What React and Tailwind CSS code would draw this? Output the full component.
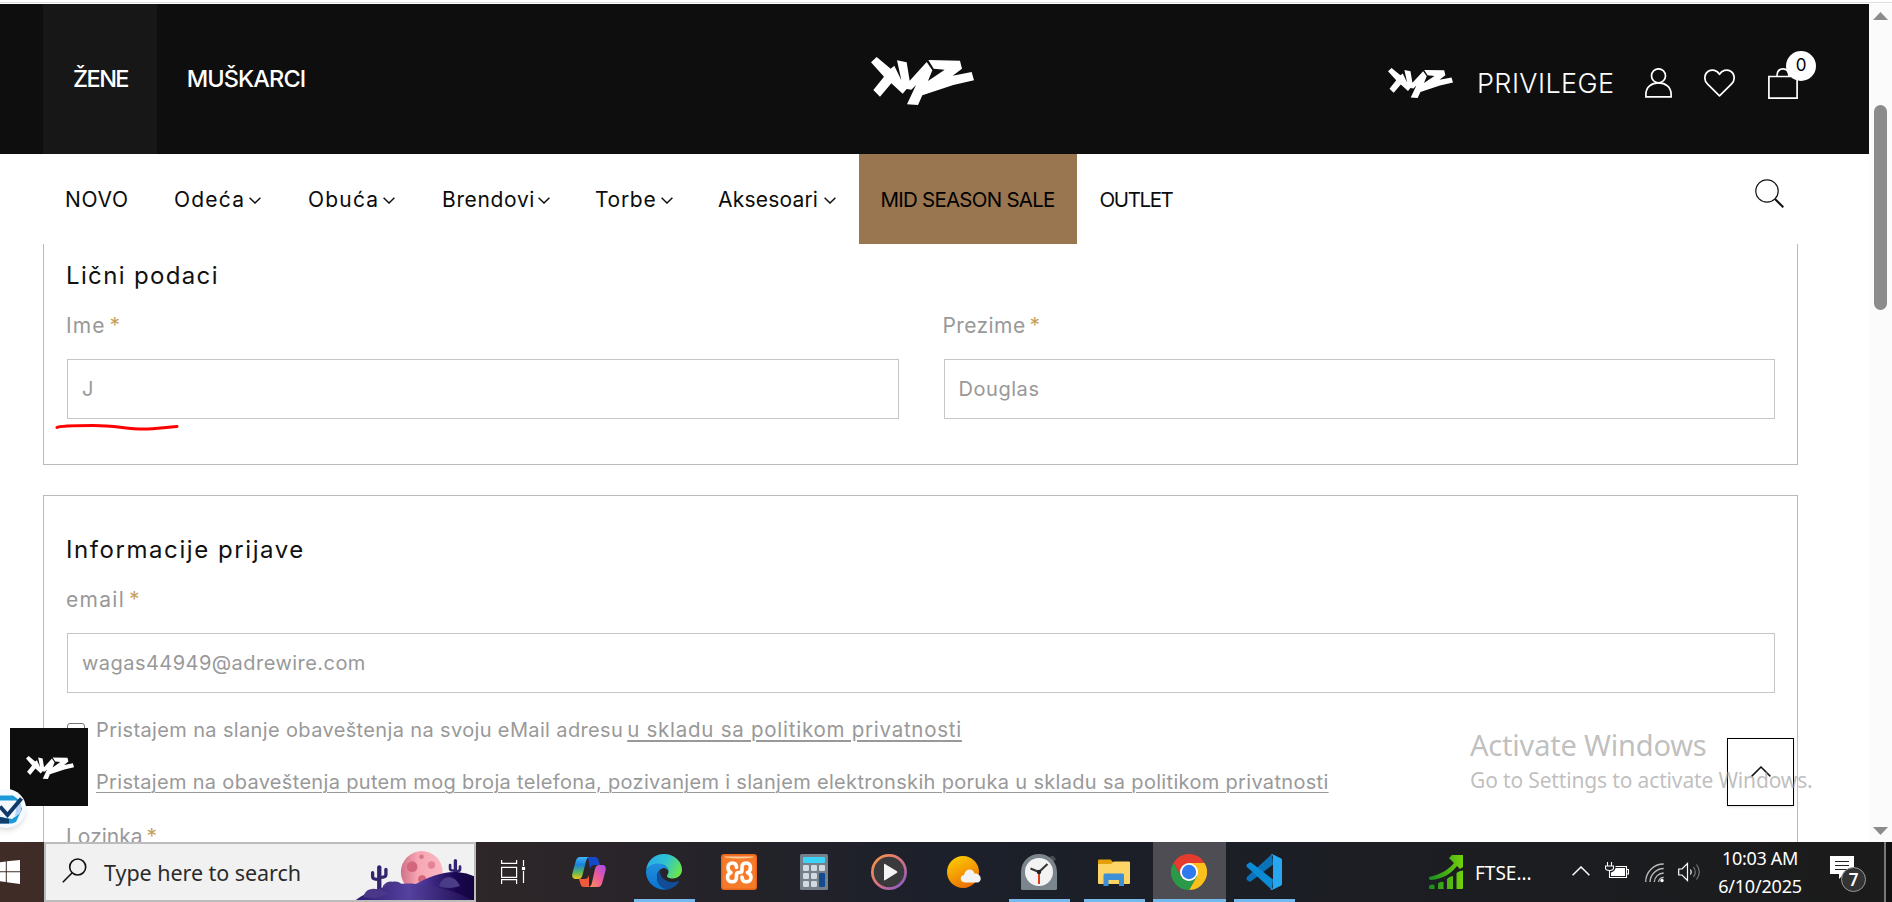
import React from "react";

const LOGO_PATH =
  "M230 171L272 206L283 197L304 241L291 181L320 187L329 242L380 186L397 211L384 243L434 209L401 206L385 180L480 182L486 206L458 227L515 216L522 241L460 255L367 286L354 315L321 313L348 255L334 269L320 267L308 281L274 250L240 290L220 270L252 230L213 187Z";

function Logo({ className }) {
  return (
    <svg viewBox="213 171 309 144" preserveAspectRatio="none" className={className} fill="#fff">
      <path d={LOGO_PATH} />
    </svg>
  );
}

function Chevron() {
  return (
    <svg viewBox="0 0 12 7" className="h-[7px] w-3 shrink-0" fill="none" stroke="#111" strokeWidth="1.5">
      <path d="M.6 .7L6 6L11.4 .7" />
    </svg>
  );
}

function NavItem({ width, text, children }) {
  return (
    <li className="px-[22.5px]">
      <div className={`flex items-center justify-between whitespace-nowrap ${width}`}>
        <span className={text}>{children}</span>
        <Chevron />
      </div>
    </li>
  );
}

function Header() {
  return (
    <header className="flex h-[150px] shrink-0 items-center bg-[#0e0e0e] pl-[43px] text-white">
      <div className="flex h-full w-[114px] items-center justify-center bg-[#171717] pl-px text-[23.5px] font-medium tracking-[-1.6px]">
        ŽENE
      </div>
      <div className="flex h-full w-[178px] items-center justify-center text-[23.5px] font-medium tracking-[-0.9px]">
        MUŠKARCI
      </div>
      <Logo className="mt-1 ml-[536px] h-12 w-[103px]" />
      <div className="mt-2 ml-[414px] flex items-center">
        <Logo className="h-[30px] w-[65px]" />
        <span className="mt-0.5 ml-6 w-[140px] text-[27px] leading-7 font-light tracking-[0.4px]">PRIVILEGE</span>
        <svg viewBox="0 0 27 30" className="ml-7 h-[30px] w-[27px]" fill="none" stroke="#fff" strokeWidth="1.7">
          <circle cx="13.5" cy="7.8" r="7" />
          <path d="M.9 28.8v-2.6C.9 19 6.500 14.800 13.500 14.800S26.100 19 26.100 26.200v2.600Z" />
        </svg>
        <svg viewBox="0 0 31 28" className="ml-8 h-7 w-[31px]" fill="none" stroke="#fff" strokeWidth="1.7" strokeLinejoin="round">
          <path d="M15.500 26.800L3.400 14.900C-.6 10.800 .4 4.700 4.300 2.300C8.300-.1 13 1.200 15.500 5.300C18 1.200 22.700-.1 26.700 2.300C30.600 4.700 31.600 10.800 27.600 14.900Z" />
        </svg>
        <div className="relative ml-[33px] h-[31px] w-[30px]">
          <svg viewBox="0 0 30 31" className="h-full w-full" fill="none" stroke="#fff" strokeWidth="1.7">
            <path d="M.9 8.500h28.200v21.600H.9Z" />
            <path d="M9 8.300C9 3.500 11 .9 15 .9s6 2.600 6 7.400" />
          </svg>
          <span className="absolute -top-[17px] left-[18px] flex size-[30px] items-center justify-center rounded-full bg-white text-[17px] text-black">
            0
          </span>
        </div>
      </div>
    </header>
  );
}

function Nav() {
  return (
    <nav className="flex h-[90px] shrink-0 items-center bg-white pl-[42.5px] text-[21px] text-[#0c0c0c]">
      <ul className="flex h-full items-center">
        <li className="w-[107px] px-[22.5px] pt-0.5 tracking-[0.7px]">NOVO</li>
        <NavItem width="w-[89px] pt-0.5" text="tracking-[1.2px] ml-0.5">Odeća</NavItem>
        <NavItem width="w-[89px] pt-0.5" text="tracking-[1.2px] ml-0.5">Obuća</NavItem>
        <NavItem width="w-[110px] pt-0.5" text="tracking-[0.65px] ml-0.5">Brendovi</NavItem>
        <NavItem width="w-[78px] pt-0.5" text="tracking-[0.7px]">Torbe</NavItem>
        <NavItem width="w-[118px] pt-0.5" text="tracking-[0.2px]">Aksesoari</NavItem>
        <li className="flex h-[90px] w-[218px] items-center justify-center bg-[#997650] pt-0.5 text-[20.5px] tracking-[-0.75px] whitespace-nowrap text-black">
          MID SEASON SALE
        </li>
        <li className="px-[23px] pt-0.5 text-[20.5px] tracking-[-1.4px]">OUTLET</li>
      </ul>
      <svg viewBox="0 0 29 29" className="mr-[85px] -mt-3 ml-auto size-[29px]" fill="none" stroke="#111">
        <circle cx="12" cy="12" r="11.200" strokeWidth="1.200" />
        <path d="M20 20L28.300 28.300" strokeWidth="2" />
      </svg>
    </nav>
  );
}

function Label({ className, children }) {
  return (
    <div className="-ml-px text-[21px] leading-7 text-[#999]">
      <span className={className}>{children}</span>
      <span className="ml-1 text-[#c5a15c]">*</span>
    </div>
  );
}

function Field({ className, children }) {
  return (
    <div className={`mt-[19px] flex h-[60px] items-center border border-[#c6c6c6] px-3.5 pb-px text-xl text-[#999] ${className}`}>
      {children}
    </div>
  );
}

function Checkbox() {
  return <span className="mt-1 size-[18px] shrink-0 rounded-[3px] border-[1.5px] border-[#767676] bg-white" />;
}

function Form() {
  return (
    <main className="min-h-0 flex-1 overflow-hidden pr-[71px] pl-[43px]">
      <section className="h-[221px] border border-t-0 border-[#bbb] pt-4 pr-[22px] pl-[23px]">
        <h2 className="-ml-px text-2xl leading-8 tracking-[1.35px] text-[#111]">Lični podaci</h2>
        <div className="mt-5 grid grid-cols-2 gap-[45px]">
          <div>
            <Label className="tracking-[1.1px]">Ime</Label>
            <Field>J</Field>
          </div>
          <div>
            <Label className="tracking-[0.4px]">Prezime</Label>
            <Field className="tracking-[0.55px]">Douglas</Field>
          </div>
        </div>
      </section>
      <section className="mt-[30px] h-[500px] border border-[#bbb] pt-[38px] pr-[22px] pl-[23px]">
        <h2 className="-ml-px text-2xl leading-8 tracking-[1.57px] text-[#111]">Informacije prijave</h2>
        <div className="mt-5">
          <Label className="tracking-[1.3px]">email</Label>
          <Field className="tracking-[0.46px]">wagas44949@adrewire.com</Field>
        </div>
        <div className="mt-[23px] flex h-7 items-center text-xl leading-7 whitespace-nowrap text-[#999]">
          <Checkbox />
          <span className="ml-[11px] tracking-[0.36px]">Pristajem na slanje obaveštenja na svoju eMail adresu</span>
          <span className="ml-[4px] text-[20.5px] tracking-[0.74px] underline decoration-2 underline-offset-[3px]">
            u skladu sa politikom privatnosti
          </span>
        </div>
        <div className="mt-6 flex h-7 items-center text-xl leading-7 whitespace-nowrap text-[#999]">
          <Checkbox />
          <span className="ml-[11px] tracking-[0.32px] underline decoration-1 underline-offset-[3px]">
            Pristajem na obaveštenja putem mog broja telefona, pozivanjem i slanjem elektronskih poruka u skladu sa politikom privatnosti
          </span>
        </div>
        <div className="mt-[27px]">
          <Label className="tracking-[0px]">Lozinka</Label>
        </div>
      </section>
    </main>
  );
}

function Scrollbar() {
  return (
    <div className="flex w-[23px] flex-col items-center bg-[#fbfbfb] pt-2 pb-[7px]">
      <svg viewBox="0 0 15 8" className="h-2 w-[15px]" fill="#8b8b8b">
        <path d="M7.500 0L15 8H0Z" />
      </svg>
      <div className="mt-[85px] h-[205px] w-[13px] rounded-full bg-[#8b8b8b]" />
      <svg viewBox="0 0 15 8" className="mt-auto h-2 w-[15px]" fill="#8b8b8b">
        <path d="M0 0H15L7.500 8Z" />
      </svg>
    </div>
  );
}

function DesertScene() {
  return (
    <svg viewBox="1065 492 361 168" className="h-14 w-[120px] self-end">
      <defs>
        <linearGradient id="hillA" x1="0" x2="1">
          <stop offset="0" stopColor="#2b1a70" />
          <stop offset=".45" stopColor="#55419f" />
          <stop offset="1" stopColor="#1b0a4c" />
        </linearGradient>
        <linearGradient id="hillB" x1="0" x2="1">
          <stop offset="0" stopColor="#5a46ae" />
          <stop offset=".7" stopColor="#1a0650" />
          <stop offset="1" stopColor="#14033f" />
        </linearGradient>
        <linearGradient id="moon" x1="0" x2="1">
          <stop offset="0" stopColor="#cf7187" />
          <stop offset=".4" stopColor="#f7a5b3" />
          <stop offset="1" stopColor="#f9b9c2" />
        </linearGradient>
      </defs>
      <circle cx="1269" cy="576" r="63" fill="url(#moon)" />
      <circle cx="1240" cy="560" r="16" fill="#d3667c" />
      <circle cx="1298" cy="555" r="11" fill="#e58396" />
      <circle cx="1268" cy="530" r="7" fill="#d8748a" />
      <circle cx="1270" cy="598" r="12" fill="#d3667c" />
      <g fill="none" stroke="#34246f" strokeLinecap="round">
        <path d="M1141 562V640" strokeWidth="13" />
        <path d="M1121 578V590Q1121 598 1139 598M1161 568V584Q1161 592 1143 592" strokeWidth="10" />
        <path d="M1370 542V590" strokeWidth="10" />
        <path d="M1354 555V566Q1354 572 1368 572M1384 560V568Q1384 574 1372 574" strokeWidth="8" />
      </g>
      <path d="M1240 618C1290 590 1340 572 1380 577Q1405 578 1428 590V662H1240Z" fill="url(#hillB)" />
      <path d="M1320 618Q1330 592 1350 591Q1372 592 1384 618Q1350 630 1320 618Z" fill="#4b3c87" />
      <path d="M1152 618Q1164 603 1180 605Q1204 602 1214 620Q1190 636 1152 630Z" fill="#4a3787" />
      <path d="M1068 662C1110 630 1190 605 1250 612C1320 617 1370 635 1426 662Z" fill="url(#hillA)" />
      <path d="M1094 646Q1104 624 1130 627Q1156 626 1166 642Q1140 660 1094 652Z" fill="#4a3787" />
    </svg>
  );
}

function TaskbarApp({ running, active, children }) {
  return (
    <div
      className={`flex h-full flex-col items-center ${active ? "mx-px w-[73px] bg-[#4d4d53]" : "w-[75px]"}`}
    >
      <div className="mt-3 h-9 w-9">{children}</div>
      {running && <div className={`mt-auto h-[3px] bg-[#76b9ed] ${active ? "w-full" : "w-[61px]"}`} />}
    </div>
  );
}

const S = { viewBox: "0 0 36 36", className: "size-9" };

function Copilot() {
  return (
    <svg {...S}>
      <defs>
        <linearGradient id="cpA" x1="0" y1="0" x2="0" y2="1">
          <stop offset="0" stopColor="#3fb6f5" />
          <stop offset=".35" stopColor="#1a83dc" />
          <stop offset=".7" stopColor="#5cb65b" />
          <stop offset="1" stopColor="#f0c514" />
        </linearGradient>
        <linearGradient id="cpB" x1="1" y1="0" x2="0" y2="1">
          <stop offset="0" stopColor="#a04bf0" />
          <stop offset=".5" stopColor="#ee5b98" />
          <stop offset="1" stopColor="#fc9a4e" />
        </linearGradient>
      </defs>
      <path d="M17 3h7c2 0 3 1.500 3.600 3.500L29 11h-5c-3 0-4 1-5 4Z" fill="#1649c8" />
      <path d="M18 33h-5c-2 0-3-1-3.500-3L8 25h5c3 0 4-1 5-4Z" fill="#f05a3c" />
      <path d="M9 3h10c-2 0-3 1-3.800 3.500L11.500 21c-1 3-2 4-4 4H5c-3.500 0-4.500-2.500-3.500-6L4.800 7C5.600 4.400 7 3 9 3Z" fill="url(#cpA)" />
      <path d="M27 33H17c2 0 3-1 3.800-3.500L24 15c1-3 2-4 4-4h3c3.500 0 4.500 2.500 3.500 6L31.200 29c-.8 2.600-2.200 4-4.200 4Z" fill="url(#cpB)" />
    </svg>
  );
}

function Edge() {
  return (
    <svg {...S}>
      <defs>
        <linearGradient id="edA" x1="0" y1=".2" x2="1" y2=".6">
          <stop offset="0" stopColor="#28a9ee" />
          <stop offset=".5" stopColor="#2ec3d0" />
          <stop offset="1" stopColor="#6be54c" />
        </linearGradient>
        <linearGradient id="edB" x1="0" y1="0" x2="0" y2="1">
          <stop offset="0" stopColor="#2190dd" />
          <stop offset="1" stopColor="#0a73cf" />
        </linearGradient>
      </defs>
      <path d="M.2 16C1 7 8 0 18 0s18 7.500 18 15.500c0 5.500-4 9-9 9-4.500 0-6-1.500-6-2.800 0-1 1.500-1.700 1.500-4.200C22.500 13 18 10 12.500 10 6.500 10 1.500 13 .2 16Z" fill="url(#edA)" />
      <path d="M.1 16.500C2 12 7 9.600 12.500 9.600c6 0 10 3.900 10 7.900-1-2-3-3.500-5-3.500-4 1-7 5-6.500 10 .5 6 5 10.500 11 11.200A18 18 0 0 1 0 18Z" fill="url(#edB)" />
      <path d="M14 16c-5 5-4 18 8 19.400 5-1 9-3.900 11.300-7.900.3-.6-.3-.9-.8-.6C24 30.500 13.500 26 14 16Z" fill="#124d98" />
    </svg>
  );
}

function Xampp() {
  return (
    <svg {...S}>
      <rect width="36" height="36" rx="3" fill="#e8671a" />
      <rect x="1.500" y="1.500" width="33" height="33" rx="2" fill="#f57b2a" />
      <path d="M4 2.500H32V3.500Q18 5.500 4 3.500Z" fill="#ffc9a0" />
      <g fill="none" stroke="#fff" strokeWidth="3.600" strokeLinecap="round" strokeLinejoin="round">
        <path d="M15.500 13.500C15.500 10.500 14 9 11.500 9C8.500 9 7 11 7 13.500C7 16 8 17.500 10 18.500C7.500 19.500 6.500 21 6.500 23.500C6.500 26 8.500 27.800 11 27.800C14.500 27.800 15.500 26 15.500 22.500V20.500C15.500 19 16.500 18.500 18 18.500H19C20.500 18.500 21 17.500 21 16V13.500C21 10.500 22 9 25 9C28 9 29.500 11 29.500 13.500C29.500 16 28.500 17.500 26.500 18.500C29 19.500 30 21 30 23.500C30 26 28 27.800 25.500 27.800C22.500 27.800 21 26 21 23" />
      </g>
    </svg>
  );
}

function Calculator() {
  return (
    <svg {...S}>
      <rect x="4" width="28" height="36" rx="1.500" fill="#75808a" />
      <rect x="7" y="3" width="22" height="6" rx="1" fill="#3dd2fa" />
      <g fill="#d3d9df">
        {[11, 19, 27].map((y) => (
          <React.Fragment key={y}>
            <rect x="7" y={y} width="6" height="6" rx="1.200" />
            <rect x="15" y={y} width="6" height="6" rx="1.200" />
          </React.Fragment>
        ))}
        <rect x="23" y="11" width="6" height="6" rx="1.200" />
      </g>
      <rect x="23" y="19" width="6" height="14" rx="1.200" fill="#124b8f" />
    </svg>
  );
}

function MediaPlayer() {
  return (
    <svg {...S}>
      <defs>
        <linearGradient id="mp" x1="0" y1="0" x2="1" y2="1">
          <stop offset="0" stopColor="#ff9a3c" />
          <stop offset=".5" stopColor="#d9737f" />
          <stop offset="1" stopColor="#7a58d6" />
        </linearGradient>
      </defs>
      <circle cx="18" cy="18" r="18" fill="url(#mp)" />
      <circle cx="18" cy="18" r="15.300" fill="#3a3a3c" />
      <path d="M13 10.500Q13 9.500 14 10L26 17.300Q26.700 18 26 18.700L14 26.300Q13 26.700 13 25.700Z" fill="#f4f4f4" />
    </svg>
  );
}

function Weather() {
  return (
    <svg {...S}>
      <defs>
        <linearGradient id="sun" x1="0" y1="0" x2=".5" y2="1">
          <stop offset="0" stopColor="#ffd400" />
          <stop offset="1" stopColor="#ec7404" />
        </linearGradient>
      </defs>
      <circle cx="17" cy="18" r="16" fill="url(#sun)" />
      <path d="M19 28.500C14 28.500 13 22 18 21C19.500 14 27 14 28.500 19.500C35.500 19 37 28 31 28.500Z" fill="#f3f3f3" />
    </svg>
  );
}

function Clock() {
  return (
    <svg {...S}>
      <path d="M28 3L32 1.500L35 5L32.500 8Z" fill="#4b4b4b" />
      <path d="M0 18A18 18 0 0 1 36 18V34.500Q36 36 34.500 36H1.500Q0 36 0 34.500Z" fill="#7b858d" />
      <circle cx="18" cy="18" r="14" fill="#f3f3f4" />
      <path d="M18 18V30" stroke="#dc3d17" strokeWidth="2" />
      <path d="M9.500 14.500L18 18L26.500 10" fill="none" stroke="#383838" strokeWidth="2.200" />
      <circle cx="18" cy="18" r="2.200" fill="#222" />
    </svg>
  );
}

function Explorer() {
  return (
    <svg {...S}>
      <path d="M2 6.500Q2 5.500 3 5.500H14.500L18 9V13H2Z" fill="#e3a008" />
      <path d="M2 10H15L18 7.500H33Q34 7.500 34 8.500V29Q34 30 33 30H3Q2 30 2 29Z" fill="#fdd466" />
      <path d="M7.500 21Q7.500 19.500 9 19.500H26.500Q28 19.500 28 21V32H23V26H12.500V32H7.500Z" fill="#3d8fd6" />
    </svg>
  );
}

function Chrome() {
  return (
    <svg {...S}>
      <path d="M2.400 9A18 18 0 0 1 33.600 9H18L10.200 22.500Z" fill="#e33b2e" />
      <path d="M33.600 9A18 18 0 0 1 18 36L25.800 22.500L18 9Z" fill="#fcc01c" />
      <path d="M18 36A18 18 0 0 1 2.400 9L10.200 22.500H25.800Z" fill="#2a9a48" />
      <circle cx="18" cy="18" r="9" fill="#fff" />
      <circle cx="18" cy="18" r="7.200" fill="#2f7bee" />
    </svg>
  );
}

function VsCode() {
  return (
    <svg {...S}>
      <path d="M26 0L2.500 21.500Q-.6 24 1 26L3 27.600Q4 28 5.500 27L27 10.500Z" fill="#0a72b8" />
      <path d="M26 36L1 13Q-.3 11.500 1 10.200L3.500 8.400Q4.500 8 5.500 8.800L27 25.500Z" fill="#0b8bd4" />
      <path d="M26 0L34.800 4.200Q36 4.800 36 6V30Q36 31.200 34.800 31.800L26 36Q24.500 36 24.500 34.500C26.500 35.500 27 34 27 33V3C27 1.500 26 .5 24.500 1.500Z" fill="#27a7f0" />
    </svg>
  );
}

function Taskbar() {
  return (
    <footer className="flex h-[60px] shrink-0 overflow-hidden bg-linear-to-r from-[#402c27] via-[#1c202a] to-[#1b1b1b] font-['Noto_Sans',sans-serif] text-white">
      <div className="flex w-11 shrink-0 pt-[18px]">
        <svg viewBox="0 0 20 24" className="h-6 w-5" fill="#fff">
          <path d="M0 2.200L5.800 1.400V11.200H0ZM6.800 1.200L20 0V11.200H6.800ZM0 12.300H5.800V22L0 21.200ZM6.800 12.300H20V24L6.800 22.200Z" />
        </svg>
      </div>
      <div className="flex w-[432px] shrink-0 items-center border-2 border-[#bcbcbc] bg-[#f1f1f1]">
        <svg viewBox="0 0 25 25" className="-mt-1 ml-4 size-[25px]" fill="none" stroke="#111" strokeWidth="1.600">
          <circle cx="15.700" cy="9" r="8" />
          <path d="M10 15L.8 24.200" />
        </svg>
        <span className="mt-[3px] ml-[17px] flex-1 text-[21.5px] tracking-[-0.05px] whitespace-nowrap text-[#2b2b2b]">
          Type here to search
        </span>
        <DesertScene />
      </div>
      <div className="flex w-[74px] shrink-0 justify-center pt-[18px]">
        <svg viewBox="0 0 25 24" className="h-6 w-[25px]" fill="none" stroke="#fff" strokeWidth="1.200">
          <path d="M.6 0V3.400H15.600V0M.6 7.400H15.600V17.400H.6ZM.6 24V19.600H15.600V24M22.500 0V6M22.500 11V23" />
          <rect x="21.500" y="7.500" width="2" height="2" fill="#fff" />
        </svg>
      </div>
      <div className="ml-[1.5px] flex shrink-0">
        <TaskbarApp><Copilot /></TaskbarApp>
        <TaskbarApp running><Edge /></TaskbarApp>
        <TaskbarApp><Xampp /></TaskbarApp>
        <TaskbarApp><Calculator /></TaskbarApp>
        <TaskbarApp><MediaPlayer /></TaskbarApp>
        <TaskbarApp><Weather /></TaskbarApp>
        <TaskbarApp running><Clock /></TaskbarApp>
        <TaskbarApp running><Explorer /></TaskbarApp>
        <TaskbarApp running active><Chrome /></TaskbarApp>
        <TaskbarApp running><VsCode /></TaskbarApp>
      </div>
      <div className="ml-[127.5px] flex h-full flex-1 items-center">
        <svg viewBox="0 0 34 34" className="size-[34px]">
          <defs>
            <linearGradient id="ft" x1="0" x2="1">
              <stop offset="0" stopColor="#188a22" />
              <stop offset="1" stopColor="#74d20c" />
            </linearGradient>
          </defs>
          <path d="M0 22C13 19 20 14 25 8L20 3L23 0H34V12L31 14L28 11C22 19 13 24 2 25Q-.5 25 0 22Z" fill="url(#ft)" />
          <path d="M0 31Q2 28.500 5.500 30V34H1Q0 34 0 33ZM9 28.500Q11 26 14.500 27V34H9ZM18 24Q20 21.500 24 21V34H18ZM27.500 18Q30 15.500 34 15.500V33Q34 34 33 34H27.500Z" fill="url(#ft)" />
        </svg>
        <span className="mt-[3px] ml-3 w-[84px] text-[19px]">FTSE...</span>
        <svg viewBox="0 0 18 10" className="-mt-0.5 ml-[13px] h-2.5 w-[18px]" fill="none" stroke="#fff" strokeWidth="1.500">
          <path d="M.6 9.300L9 1L17.400 9.300" />
        </svg>
        <svg viewBox="0 0 24 18" className="-mt-0.5 ml-[15px] h-[18px] w-6" fill="none" stroke="#fff">
          <path d="M2.500 0V4M6.500 0V4M.5 4H8.500V6Q8.500 8.500 4.500 8.500Q.5 8.500 .5 6ZM4.500 9V15.500H21.500V4.500H10.500M22 7.500H23.500V12H22" strokeWidth="1.100" />
          <path d="M6 14V10.500Q10 9 10.500 6H20V14Z" fill="#fff" stroke="none" />
        </svg>
        <svg viewBox="0 0 20 20" className="mt-0.5 ml-4 size-5" fill="none" stroke="#bbb" strokeWidth="1.300">
          <path d="M.7 19A18 18 0 0 1 18.700 1M5 19A14 14 0 0 1 18.700 5.500M9.300 19A9.500 9.500 0 0 1 18.700 10M13.500 19A5 5 0 0 1 18.700 14.500" />
          <circle cx="17" cy="17.500" r="1.700" fill="#fff" stroke="none" />
        </svg>
        <svg viewBox="0 0 23 20" className="ml-[13px] h-5 w-[23px]" fill="none" stroke="#fff" strokeWidth="1.200">
          <path d="M.7 7H4L9.500 1.500V18.500L4 13H.7ZM12.500 7.500Q14 10 12.500 12.500" />
          <path d="M15.500 5Q19 10 15.500 15M18.500 2.500Q24 10 18.500 17.500" stroke="#777" />
        </svg>
        <div className="ml-[13px] flex w-[92px] flex-col items-center text-lg leading-7 whitespace-nowrap">
          <span className="tracking-[-0.3px]">10:03 AM</span>
          <span className="tracking-[-0.2px]">6/10/2025</span>
        </div>
        <div className="relative mt-1 ml-6 h-9 w-9">
          <svg viewBox="0 0 24 23" className="h-[23px] w-6">
            <path d="M0 0H24V18H14L9 23V18H0Z" fill="#fff" />
            <path d="M5 5.500H19M5 9.500H19M5 13.500H19" stroke="#222" strokeWidth="1.200" />
          </svg>
          <span className="absolute top-[11px] left-[11px] flex size-[25px] items-center justify-center rounded-full border border-[#999] bg-[#333] text-[17px] font-semibold">
            7
          </span>
        </div>
        <div className="ml-auto h-full w-2 border-l-2 border-[#777] bg-[#111]" />
      </div>
    </footer>
  );
}

function Overlays() {
  return (
    <>
      <svg viewBox="0 0 126 10" className="absolute top-[422px] left-[55px] h-2.5 w-[126px]" fill="none" stroke="#f00" strokeWidth="3" strokeLinecap="round">
        <path d="M2 5.500C5 3.500 25 3.500 38 3.500C60 3.500 72 7 88 7C103 7 110 5 122 4.500" />
      </svg>
      <div className="absolute top-[728px] left-2.5 flex size-[78px] items-center justify-center bg-[#0e0e0e]">
        <Logo className="mt-px ml-0.5 h-[23px] w-12" />
      </div>
      <div className="absolute top-[789px] -left-[13px] size-[39px] overflow-hidden rounded-full bg-[#f4faff] shadow-md">
        <svg viewBox="-13 0 39 39" className="size-full">
          <path d="M-8 6.500H13L19 11L22 20L16 33L12 34.500H-8Z" fill="#1c9ad8" />
          <path d="M-10 11.500H16L21.500 17L20 24L12 30L-10 26Z" fill="#f4faff" />
          <path d="M17 12L21.500 17L20 24L15 28Z" fill="#b9d4f2" />
          <path d="M-4 27L9 30V34.500H-4Z" fill="#123e6e" />
          <path d="M0 17.500L7.500 26L21.500 9.500" fill="none" stroke="#123a68" strokeWidth="4" />
        </svg>
      </div>
      <div className="absolute top-[738px] left-[1727px] flex h-[68px] w-[67px] items-center justify-center border border-black bg-white shadow-sm">
        <svg viewBox="0 0 20 11" className="-mt-0.5 h-[11px] w-5" fill="none" stroke="#111" strokeWidth="1.500">
          <path d="M.6 10.400L10 1L19.400 10.400" />
        </svg>
      </div>
      <div className="absolute top-[725px] left-[1470px] flex flex-col font-['Noto_Sans',sans-serif] whitespace-nowrap text-[#9b9b9b]/65">
        <span className="text-[29px] leading-10 tracking-[-0.2px]">Activate Windows</span>
        <span className="-mt-px text-[21px] leading-8 tracking-[-0.15px]">Go to Settings to activate Windows.</span>
      </div>
    </>
  );
}

export default function App() {
  return (
    <div className="relative flex h-[902px] w-[1892px] flex-col overflow-hidden bg-white font-['Inter',sans-serif]">
      <div className="h-[3px] shrink-0 border-b border-[#dedede]" />
      <div className="flex h-[839px] shrink-0 pt-px">
        <div className="flex w-[1869px] flex-col">
          <Header />
          <Nav />
          <Form />
        </div>
        <Scrollbar />
      </div>
      <Taskbar />
      <Overlays />
    </div>
  );
}
